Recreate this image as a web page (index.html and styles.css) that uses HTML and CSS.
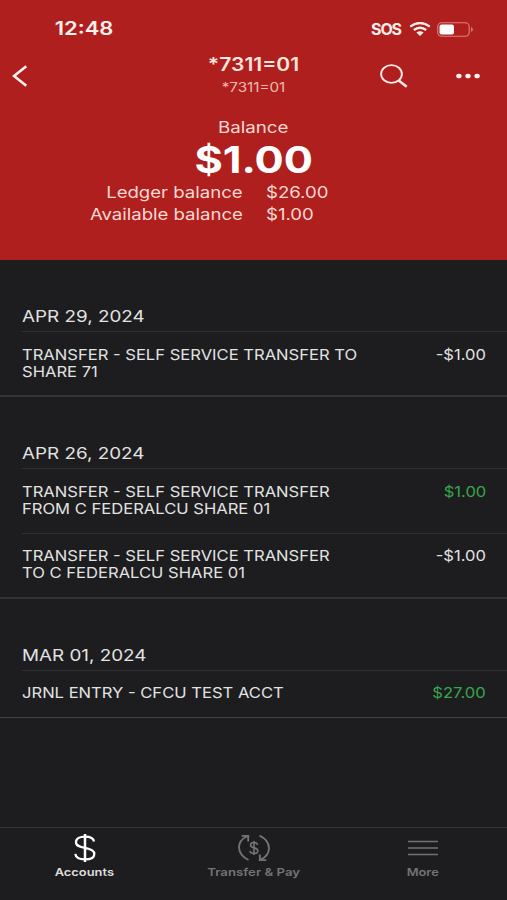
FILE: index.html
```html
<!DOCTYPE html>
<html lang="en">
<head>
<meta charset="utf-8">
<title>Account activity</title>
<link rel="stylesheet" href="styles.css">
</head>
<body>
<div class="app">
  <header class="header">
    <div class="status">
      <span class="wide time">12:48</span>
      <div class="status-icons">
        <span class="sos">SOS</span>
        <svg class="wifi" width="22" height="14" viewBox="0 0 22 14" fill="none" stroke="#fff0ee" stroke-width="2.3"><path d="M1.2 4.6Q11-2.6 20.8 4.6M4.8 8Q11 3.4 17.2 8"/><path d="M7.4 10.6Q11 7.8 14.6 10.6L11 14Z" fill="#fff0ee" stroke="none"/></svg>
        <svg class="battery" width="36" height="15" viewBox="0 0 36 15"><rect x=".7" y=".7" width="31.5" height="13.6" rx="4" fill="none" stroke="#e0817d" stroke-width="1.1"/><rect x="2.5" y="2.5" width="14.5" height="10" rx="2" fill="#fff"/><path d="M34 5v5q2-.8 2-2.500t-2-2.500" fill="#d8736f"/></svg>
      </div>
    </div>
    <div class="nav">
      <svg class="back" width="16" height="22" viewBox="0 0 16 22" fill="none" stroke="#fff3f0" stroke-width="2.6"><path d="M14.300 1.200 2 11 14.300 20.800"/></svg>
      <div class="titles">
        <h1 class="wide title">*7311=01</h1>
        <p class="wide subtitle">*7311=01</p>
      </div>
      <div class="actions">
        <svg width="28" height="24" viewBox="0 0 28 24" fill="none" stroke="#ffe9e5"><ellipse cx="11.500" cy="10" rx="10.400" ry="8.900" stroke-width="1.900"/><path d="m18.700 16.400 8 6.300" stroke-width="2.500"/></svg>
        <svg width="24" height="6" viewBox="0 0 24 6" fill="#fff0ed"><ellipse cx="2.900" cy="3" rx="2.700" ry="2.300"/><ellipse cx="12" cy="3" rx="2.700" ry="2.300"/><ellipse cx="21.100" cy="3" rx="2.700" ry="2.300"/></svg>
      </div>
    </div>
    <div class="summary">
      <span class="wide balance-label">Balance</span>
      <strong class="wide balance">$1.00</strong>
    </div>
    <dl class="details">
      <dt><span class="wide from-right">Ledger balance</span></dt><dd><span class="wide from-left">$26.00</span></dd>
      <dt><span class="wide from-right">Available balance</span></dt><dd><span class="wide from-left">$1.00</span></dd>
    </dl>
  </header>
  <main class="activity">
    <section class="group">
      <h2 class="date"><span class="wide from-left">APR 29, 2024</span></h2>
      <div class="entry"><p class="wide from-left">TRANSFER - SELF SERVICE TRANSFER TO<br>SHARE 71</p><span class="wide from-right">-$1.00</span></div>
    </section>
    <section class="group">
      <h2 class="date"><span class="wide from-left">APR 26, 2024</span></h2>
      <div class="entry"><p class="wide from-left">TRANSFER - SELF SERVICE TRANSFER<br>FROM C FEDERALCU SHARE 01</p><span class="wide from-right credit">$1.00</span></div>
      <div class="entry"><p class="wide from-left">TRANSFER - SELF SERVICE TRANSFER<br>TO C FEDERALCU SHARE 01</p><span class="wide from-right">-$1.00</span></div>
    </section>
    <section class="group">
      <h2 class="date"><span class="wide from-left">MAR 01, 2024</span></h2>
      <div class="entry short"><p class="wide from-left">JRNL ENTRY - CFCU TEST ACCT</p><span class="wide from-right credit">$27.00</span></div>
    </section>
  </main>
  <nav class="tabs">
    <a class="tab active">
      <svg width="22" height="28" viewBox="0 0 22 28" fill="none" stroke="currentColor"><path d="M20 7.500C19.500 4.300 16 2.700 11 2.700S2 4.600 2 8.200 5.500 12.800 11 13.800s9.300 2.300 9.300 6.100-4 5.500-9.300 5.500-9.200-1.900-9.700-5.500" stroke-width="2.300"/><path d="M11 0v28" stroke-width="2.500"/></svg>
      <span class="wide">Accounts</span>
    </a>
    <a class="tab">
      <svg width="32" height="28" viewBox="0 0 32 28" fill="none" stroke="currentColor" stroke-width="1.900"><path d="M10.500 26C-1.500 20.500-2 7.500 8.800 2.500M3.700 1.900h6.500v5.500M21.500 1.700c12 5.500 12.500 18.500 1.700 23.500M28.300 26.100h-6.500v-5.500"/><path d="M19.600 10.800c-.3-1.600-1.600-2.300-3.600-2.300s-3.500.8-3.500 2.500 1.300 2.400 3.500 2.900 3.900 1.100 3.900 2.900-1.700 2.700-3.900 2.700-3.700-.9-4-2.600M16 7v14" stroke-width="1.600"/></svg>
      <span class="wide">Transfer &amp; Pay</span>
    </a>
    <a class="tab">
      <svg width="32" height="28" viewBox="0 0 32 28" stroke="currentColor" stroke-width="1.500"><path d="M1 7.500h30M1 14h30M1 20.500h30"/></svg>
      <span class="wide">More</span>
    </a>
  </nav>
</div>
</body>
</html>
```
FILE: styles.css
```css
* { box-sizing: border-box; margin: 0; padding: 0; }
body { background: #1d1d1f; color: #e2e2e2; font-family: Inter, "Liberation Sans", sans-serif; }
svg { display: block; flex: none; }
.app { width: 507px; height: 900px; display: flex; flex-direction: column; overflow: hidden; }
.wide { display: inline-block; white-space: nowrap; transform: scaleX(1.17); transform-origin: center; }
.from-left { transform-origin: left; }
.from-right { transform-origin: right; }

.header { height: 260px; background: #ae1f1e; color: #fbd9d3; flex: none; }
.status { height: 52px; padding: 18px 34px 0 60px; display: flex; justify-content: space-between; }
.time { font-size: 18px; line-height: 22px; font-weight: 600; color: #fff0ed; transform: scaleX(1.22); }
.status-icons { display: flex; align-items: center; height: 22px; gap: 6px; }
.sos { font-size: 16px; font-weight: 700; letter-spacing: -1.1px; color: #fff0ed; padding-right: 2px; }
.nav { height: 65px; padding: 0 27px 0 12px; display: grid; grid-template-columns: 100px 1fr 100px; }
.back { margin-top: 13px; }
.titles { text-align: center; padding: 1px 0 0 15px; }
.title { display: block; font-size: 18px; line-height: 24px; font-weight: 600; color: #ffe4df; }
.subtitle { display: block; font-size: 13px; line-height: 18px; margin-top: 1px; color: #f4b9af; }
.actions { height: 47px; display: flex; align-items: center; justify-content: space-between; }
.summary { display: flex; flex-direction: column; align-items: center; }
.balance-label { font-size: 16px; line-height: 20px; }
.balance { font-size: 37px; line-height: 46px; height: 44px; color: #fff; }
.details { display: grid; grid-template-columns: 243px 1fr; column-gap: 23px; font-size: 16px; line-height: 22px; }
.details dt { text-align: right; }
.details .wide { transform: scaleX(1.16); }

.activity { flex: 1; }
.group { border-bottom: 2px solid #333335; padding-top: 44px; }
.group:last-child { border-bottom: 1px solid #424244; }
.date { height: 28px; margin-left: 22px; border-bottom: 1px solid #303032; font-size: 16.500px; line-height: 24px; font-weight: 400; }
.date .wide { transform: scaleX(1.142); }
.entry { height: 64px; margin-left: 22px; padding: 14px 21px 0 0; display: flex; justify-content: space-between; font-size: 14.500px; line-height: 17px; }
.entry:last-child { height: 63px; }
.entry .wide { transform: scaleX(1.143); }
.entry + .entry { border-top: 1px solid #303032; height: 64px; padding-top: 13px; }
.entry.short { height: 46px; padding-top: 13px; }
.credit { color: #36a64a; }

.tabs { height: 73px; border-top: 1px solid #363638; display: grid; grid-template-columns: repeat(3, 1fr); }
.tab { display: flex; flex-direction: column; align-items: center; padding-top: 6px; color: #737375; }
.tab span { margin-top: 3px; font-size: 11px; line-height: 15px; font-weight: 600; }
.tab:nth-child(2) span { transform: scaleX(1.2); }
.active { color: #fff; }
.tabs .active span { color: #dedede; }
```
